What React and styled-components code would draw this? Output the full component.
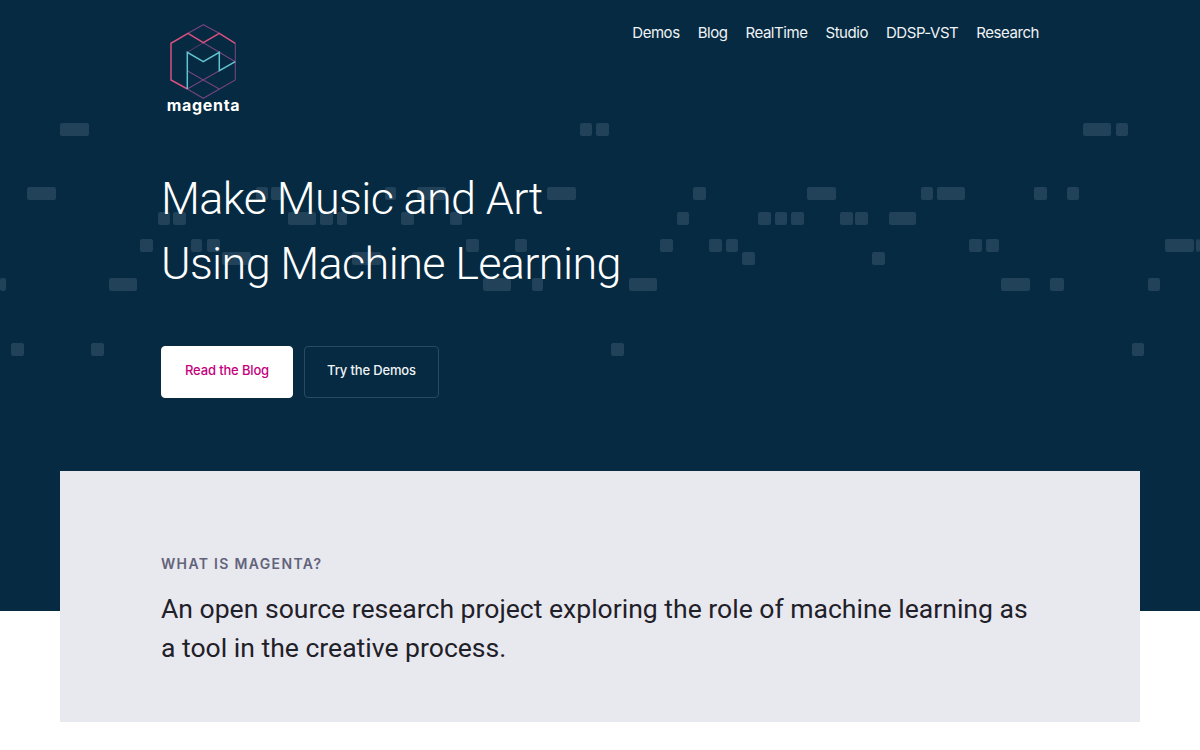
import React from "react";
import styled, { createGlobalStyle } from "styled-components";

const Global = createGlobalStyle`
  html, body { margin: 0; padding: 0; background: #fff; }
  body { font-family: Inter, "Liberation Sans", sans-serif; overflow: hidden; }
  a { text-decoration: none; }
`;

const Page = styled.div`
  position: relative;
  height: 750px;
  overflow: hidden;
`;

const Hero = styled.section`
  position: relative;
  height: 611px;
  background: #052a41;
  overflow: hidden;
`;

const NoteLayer = styled.div`
  position: absolute;
  inset: 0;
`;

const Note = styled.span`
  position: absolute;
  height: 13px;
  border-radius: 2px;
  background: #214258;
`;

const HeroInner = styled.div`
  position: relative;
  display: flex;
  flex-direction: column;
  padding: 0 161px 0 162px;
`;

const Header = styled.header`
  display: flex;
  justify-content: space-between;
  align-items: flex-start;
  height: 166px;
`;

const Logo = styled.a`
  display: flex;
  flex-direction: column;
  align-items: center;
  width: 83px;
  padding-top: 23px;
`;

const LogoWord = styled.span`
  margin-top: -5px;
  color: #fff;
  font-size: 16px;
  line-height: 18px;
  font-weight: 700;
  letter-spacing: 0.7px;
`;

const Nav = styled.nav`
  display: flex;
  gap: 18px;
  padding-top: 23px;
`;

const NavLink = styled.a`
  color: #f0f3f7;
  font-size: 15px;
  line-height: 20px;
  letter-spacing: -0.45px;
`;

const Title = styled.h1`
  margin: 0 0 0 -1px;
  color: #fff;
  font-family: Roboto, sans-serif;
  font-size: 45px;
  line-height: 65px;
  font-weight: 300;
  letter-spacing: -0.65px;
`;

const Actions = styled.div`
  display: flex;
  gap: 11px;
  margin: 50px 0 0 -1px;
`;

const Button = styled.a`
  display: flex;
  align-items: center;
  justify-content: center;
  box-sizing: border-box;
  width: ${(p) => (p.$primary ? "132px" : "135px")};
  height: 52px;
  padding-bottom: 5px;
  border-radius: 4px;
  font-size: 13px;
  font-weight: 500;
  letter-spacing: -0.15px;
  background: ${(p) => (p.$primary ? "#fff" : "transparent")};
  color: ${(p) => (p.$primary ? "#c5007d" : "#f0f3f7")};
  border: 1px solid ${(p) => (p.$primary ? "#fff" : "#2a4a63")};
`;

const Panel = styled.section`
  position: absolute;
  left: 60px;
  top: 471px;
  box-sizing: border-box;
  width: 1080px;
  height: 251px;
  padding: 83px 60px 0 102px;
  background: #e8e8ef;
`;

const Eyebrow = styled.h2`
  margin: 0 0 0 -1px;
  color: #62637a;
  font-size: 14px;
  line-height: 20px;
  font-weight: 600;
  letter-spacing: 1.33px;
`;

const Lead = styled.p`
  margin: 15px 0 0 -1px;
  color: #1f2028;
  font-family: Roboto, sans-serif;
  font-size: 26.56px;
  line-height: 39px;
  font-weight: 400;
`;

const rows = [
  [123, [[60, 29], [580, 12], [596, 13], [1083, 28], [1116, 12]]],
  [187, [[27, 29], [256, 12], [271, 14], [385, 11], [417, 29], [547, 29], [693, 13], [807, 29], [921, 12], [937, 28], [1034, 13], [1067, 12]]],
  [212, [[158, 12], [173, 13], [288, 28], [320, 13], [337, 10], [401, 13], [450, 12], [677, 12], [758, 13], [775, 12], [791, 13], [840, 13], [855, 13], [889, 27]]],
  [239, [[140, 13], [191, 11], [207, 13], [466, 13], [515, 12], [660, 13], [709, 13], [726, 12], [969, 13], [986, 13], [1165, 29], [1196, 4]]],
  [252, [[222, 29], [352, 29], [742, 13], [872, 13]]],
  [278, [[0, 6], [109, 28], [483, 28], [532, 11], [629, 28], [1001, 29], [1050, 14], [1148, 12]]],
  [343, [[11, 13], [91, 13], [611, 13], [1132, 12]]],
];

const LogoMark = () => (
  <svg width="83" height="78" viewBox="162 23 83 78" fill="none" strokeLinejoin="miter">
    <g stroke="#74437e" strokeWidth="1.1">
      <path d="M188 33.3 203.3 24.7 219.3 33.3" />
      <path d="M235.3 43.3V80L203.3 98.3 187.3 89" />
      <path d="M187.3 70.7 203.3 80 219.3 89" />
      <path d="M187.3 89 219.3 70.7" />
      <path d="M203.3 42.7 219.3 52.3 235.3 61.7" />
      <path d="M187.3 52.3 203.3 42.7" opacity=".6" />
    </g>
    <path d="M187.5 89 171 80V43.3L188 33.3 203.3 42.7 219.3 33.3 235.3 43.3" stroke="#d9507f" strokeWidth="1.5" />
    <path d="M187.3 89V52.3L203.3 61.7 219.3 52.3V70.7L235.3 61.7" stroke="#62c3d0" strokeWidth="1.5" />
  </svg>
);

export default function App() {
  return (
    <Page>
      <Global />
      <Hero>
        <NoteLayer>
          {rows.flatMap(([y, notes]) =>
            notes.map(([x, w]) => <Note key={`${y}-${x}`} style={{ left: x, top: y, width: w }} />)
          )}
        </NoteLayer>
        <HeroInner>
          <Header>
            <Logo href="#">
              <LogoMark />
              <LogoWord>magenta</LogoWord>
            </Logo>
            <Nav>
              {["Demos", "Blog", "RealTime", "Studio", "DDSP-VST", "Research"].map((n) => (
                <NavLink href="#" key={n}>{n}</NavLink>
              ))}
            </Nav>
          </Header>
          <Title>Make Music and Art<br />Using Machine Learning</Title>
          <Actions>
            <Button href="#" $primary>Read the Blog</Button>
            <Button href="#">Try the Demos</Button>
          </Actions>
        </HeroInner>
      </Hero>
      <Panel>
        <Eyebrow>WHAT IS MAGENTA?</Eyebrow>
        <Lead>An open source research project exploring the role of machine learning as<br />a tool in the creative process.</Lead>
      </Panel>
    </Page>
  );
}
